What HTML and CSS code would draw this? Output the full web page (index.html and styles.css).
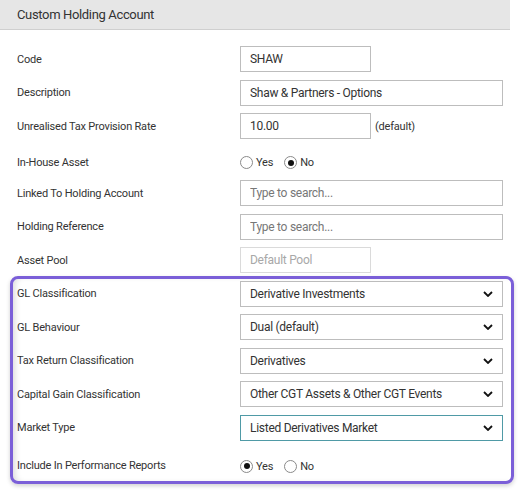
FILE: index.html
```html
<!DOCTYPE html>
<html>
<head>
    <link rel="stylesheet" href="styles.css">
</head>
<body>
    <div class="panel">
        <div class="panel-header">Custom Holding Account</div>
        <div class="form">
            <div class="row">
                <label>Code</label>
                <input class="input short" value="SHAW">
            </div>
            <div class="row">
                <label>Description</label>
                <input class="input" value="Shaw &amp; Partners - Options">
            </div>
            <div class="row">
                <label>Unrealised Tax Provision Rate</label>
                <div class="inline">
                    <input class="input short" value="10.00">
                    <span class="hint">(default)</span>
                </div>
            </div>
            <div class="row">
                <label class="low">In-House Asset</label>
                <div class="radios low">
                    <span class="radio"><span class="dot"></span>Yes</span>
                    <span class="radio"><span class="dot checked"></span>No</span>
                </div>
            </div>
            <div class="row">
                <label>Linked To Holding Account</label>
                <input class="input" placeholder="Type to search...">
            </div>
            <div class="row">
                <label>Holding Reference</label>
                <input class="input" placeholder="Type to search...">
            </div>
            <div class="row">
                <label>Asset Pool</label>
                <input class="input short disabled" placeholder="Default Pool" disabled>
            </div>
            <div class="row">
                <label>GL Classification</label>
                <div class="select">Derivative Investments<svg viewBox="0 0 10 6"><path d="M1 1l4 4 4-4"/></svg></div>
            </div>
            <div class="row">
                <label>GL Behaviour</label>
                <div class="select">Dual (default)<svg viewBox="0 0 10 6"><path d="M1 1l4 4 4-4"/></svg></div>
            </div>
            <div class="row">
                <label>Tax Return Classification</label>
                <div class="select">Derivatives<svg viewBox="0 0 10 6"><path d="M1 1l4 4 4-4"/></svg></div>
            </div>
            <div class="row">
                <label>Capital Gain Classification</label>
                <div class="select">Other CGT Assets &amp; Other CGT Events<svg viewBox="0 0 10 6"><path d="M1 1l4 4 4-4"/></svg></div>
            </div>
            <div class="row">
                <label>Market Type</label>
                <div class="select focused">Listed Derivatives Market<svg viewBox="0 0 10 6"><path d="M1 1l4 4 4-4"/></svg></div>
            </div>
            <div class="row last">
                <label>Include In Performance Reports</label>
                <div class="radios">
                    <span class="radio"><span class="dot checked"></span>Yes</span>
                    <span class="radio"><span class="dot"></span>No</span>
                </div>
            </div>
        </div>
        <div class="highlight"></div>
    </div>
</body>
</html>
```

FILE: styles.css
```css
body {
    margin: 0;
    background: #ffffff;
    font-family: Roboto, "Liberation Sans", Arial, sans-serif;
    color: #333333;
}
.panel {
    position: relative;
    width: 510px;
    height: 494px;
    background: #ffffff;
}
.panel-header {
    height: 29px;
    line-height: 29px;
    padding-left: 17px;
    background: #e6e6e6;
    border-bottom: 1px solid #cfcfcf;
    font-size: 13px;
    letter-spacing: -0.35px;
    color: #333333;
}
.form {
    display: flex;
    flex-direction: column;
    gap: 7.5px;
    padding: 16px 0 0 17px;
}
.row {
    display: grid;
    grid-template-columns: 223px 263px;
    align-items: center;
    height: 26px;
}
.row.last {
    margin-top: 4px;
}
.row label {
    font-size: 11px;
    letter-spacing: -0.2px;
    color: #333333;
}
.low {
    padding-top: 6px;
}
.input {
    box-sizing: border-box;
    width: 263px;
    height: 26px;
    border: 1px solid #bdbdbd;
    padding: 0 9px;
    font-family: inherit;
    font-size: 12px;
    letter-spacing: -0.28px;
    color: #333333;
    background: #ffffff;
    outline: none;
}
.input::placeholder {
    color: #777777;
}
.input.short {
    width: 131px;
}
.input.disabled::placeholder {
    color: #a8a8a8;
}
.input.disabled {
    border-color: #dadada;
}
.inline {
    display: flex;
    align-items: center;
    gap: 4px;
}
.hint {
    font-size: 11px;
    letter-spacing: -0.2px;
    color: #333333;
}
.radios {
    display: flex;
    gap: 11px;
    font-size: 11px;
    letter-spacing: -0.2px;
    padding-top: 2px;
}
.radios.low {
    padding-top: 6px;
}
.radio {
    display: flex;
    align-items: center;
    gap: 3px;
}
.dot {
    box-sizing: border-box;
    width: 13px;
    height: 13px;
    border: 1px solid #8a8a8a;
    border-radius: 50%;
    display: flex;
    align-items: center;
    justify-content: center;
}
.dot.checked::after {
    content: "";
    width: 6px;
    height: 6px;
    border-radius: 50%;
    background: #111111;
}
.select {
    box-sizing: border-box;
    width: 263px;
    height: 26px;
    border: 1px solid #bdbdbd;
    padding: 0 9px;
    font-size: 12px;
    letter-spacing: -0.28px;
    color: #333333;
    display: flex;
    align-items: center;
    justify-content: space-between;
}
.select svg {
    width: 10px;
    height: 6px;
    fill: none;
    stroke: #111111;
    stroke-width: 1.8;
}
.select.focused {
    border-color: #4f9aa6;
}
.highlight {
    position: absolute;
    left: 10px;
    top: 276px;
    width: 498px;
    height: 202px;
    border: 3px solid #7b5fd8;
    border-radius: 8px;
    box-shadow: inset 5px 0 6px -3px rgba(0, 0, 0, 0.15), 0 2px 4px rgba(0, 0, 0, 0.18);
    pointer-events: none;
}
```
